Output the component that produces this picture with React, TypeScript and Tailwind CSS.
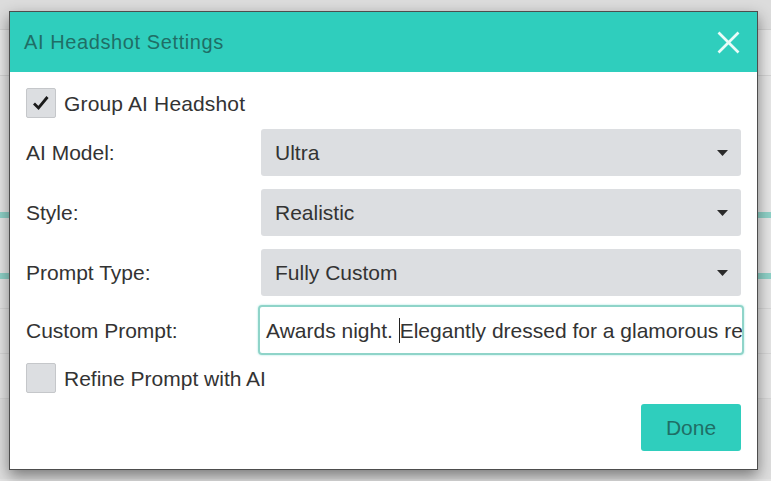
import React from "react";

function Caret() {
  return (
    <svg width="11" height="6" viewBox="0 0 11 6" className="shrink-0">
      <polygon points="0,0 11,0 5.5,6" fill="#2b2b2b" />
    </svg>
  );
}

function SelectRow({ label, value }: { label: string; value: string }) {
  return (
    <div className="flex items-center h-[47px]">
      <div className="w-[235px] shrink-0 text-[21px] text-[#333] leading-none">{label}</div>
      <div className="flex-1 h-full bg-[#dcdee1] rounded-[3px] flex items-center justify-between pl-[14px] pr-[13px]">
        <span className="text-[21px] text-[#333] leading-none">{value}</span>
        <Caret />
      </div>
    </div>
  );
}

export default function App() {
  return (
    <div className="relative w-[771px] h-[481px] overflow-hidden bg-[#e4e4e4] font-[family-name:'Liberation_Sans',Arial,sans-serif]">
      {/* background page */}
      <div className="flex flex-col">
        <div className="h-[30px] bg-[#dcdcdc] border-b border-[#d0d0d0]" />
        <div className="h-[46px] bg-[#e9e9e9] border-b border-[#d4d4d4]" />
        <div className="h-[136px] bg-[#e6e6e6]" />
        <div className="h-[6px] bg-[#8fd2c8]" />
        <div className="h-[55px] bg-[#e6e6e6]" />
        <div className="h-[6px] bg-[#8fd2c8]" />
        <div className="h-[30px] border-b border-[#d6d6d6]" />
        <div className="h-[45px] border-b border-[#d6d6d6]" />
        <div className="h-[45px] border-b border-[#d6d6d6]" />
        <div className="h-[80px] bg-[#dedede]" />
      </div>

      {/* dialog */}
      <div className="absolute left-[9px] top-[11px] w-[749px] h-[459px] border border-[#4d4d4d] bg-white shadow-[0_6px_14px_rgba(0,0,0,0.45)] flex flex-col">
        <div className="h-[60px] shrink-0 bg-[#2fcebd] flex items-center justify-between pl-[14px] pr-[17px]">
          <span className="text-[20px] tracking-[0.6px] text-[#1f6e66] leading-none">AI Headshot Settings</span>
          <svg width="23" height="23" viewBox="0 0 23 23">
            <line x1="1.5" y1="1.5" x2="21.5" y2="21.5" stroke="#eafcf9" strokeWidth="2.6" />
            <line x1="21.5" y1="1.5" x2="1.5" y2="21.5" stroke="#eafcf9" strokeWidth="2.6" />
          </svg>
        </div>

        <div className="flex flex-col pl-[16px] pr-[16px] pt-[16px]">
          <div className="flex items-center h-[30px]">
            <div className="w-[30px] h-[30px] bg-[#dcdee1] border border-[#c5c7ca] rounded-[2px] flex items-center justify-center">
              <svg width="20" height="20" viewBox="0 0 20 20">
                <polyline points="3,10.5 7.5,15 16.5,4" fill="none" stroke="#1a1a1a" strokeWidth="2.8" strokeLinejoin="miter" />
              </svg>
            </div>
            <span className="ml-[8px] text-[21px] tracking-[0.15px] text-[#333] leading-none">Group AI Headshot</span>
          </div>

          <div className="mt-[11px] flex flex-col gap-[13px]">
            <SelectRow label="AI Model:" value="Ultra" />
            <SelectRow label="Style:" value="Realistic" />
            <SelectRow label="Prompt Type:" value="Fully Custom" />
          </div>

          <div className="mt-[9px] flex items-center h-[50px]">
            <div className="w-[232px] shrink-0 text-[21px] text-[#333] leading-none">Custom Prompt:</div>
            <div className="flex-1 h-full mr-[-3px] border-2 border-[#8fd4c9] rounded-[4px] shadow-[0_0_2px_rgba(47,206,189,0.5)] flex items-center pl-[6px] overflow-hidden">
              <span className="whitespace-nowrap text-[21px] text-[#333] leading-none flex items-center">
                Awards night.&nbsp;<span className="inline-block w-px h-[25px] bg-[#222]" />Elegantly dressed for a glamorous red carpet event
              </span>
            </div>
          </div>

          <div className="mt-[8px] flex items-center h-[30px]">
            <div className="w-[30px] h-[30px] bg-[#dcdee1] border border-[#c5c7ca] rounded-[2px]" />
            <span className="ml-[8px] text-[21px] text-[#333] leading-none">Refine Prompt with AI</span>
          </div>

          <div className="mt-[11px] flex justify-end">
            <button className="w-[100px] h-[47px] bg-[#2fcebd] rounded-[3px] text-[21px] text-[#1f6e66] leading-none">Done</button>
          </div>
        </div>
      </div>
    </div>
  );
}
